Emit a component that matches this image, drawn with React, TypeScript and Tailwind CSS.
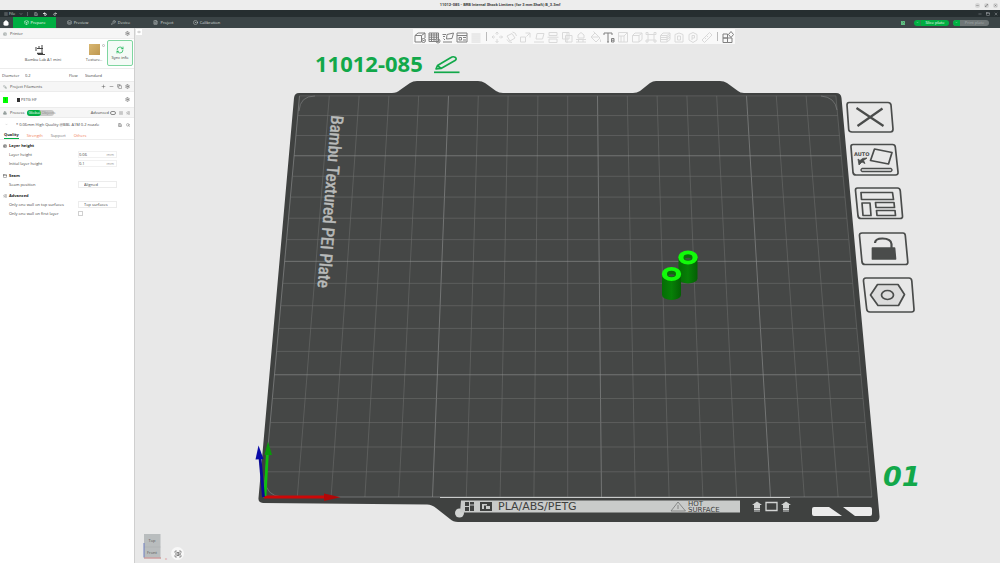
import type { ReactNode } from "react";
import {
  Box,
  Boxes,
  ChevronDown,
  ChevronsLeftRight,
  CircleDot,
  Copy,
  FileText,
  Home,
  Layers,
  List,
  ListChecks,
  Maximize2,
  Menu,
  Minus,
  PanelTop,
  Plus,
  Printer,
  Redo2,
  RefreshCw,
  Save,
  ScanEye,
  Search,
  Settings,
  SquareStack,
  Undo2,
  Wrench,
  X,
  type LucideIcon,
} from "lucide-react";

const FONT = "font-['Open_Sans','Noto_Sans',sans-serif]";

const TABS: { label: string; icon: LucideIcon }[] = [
  { label: "Prepare", icon: Box },
  { label: "Preview", icon: Layers },
  { label: "Device", icon: Wrench },
  { label: "Project", icon: FileText },
  { label: "Calibration", icon: CircleDot },
];

export default function App() {
  return (
    <div
      className={`flex h-screen w-full flex-col overflow-hidden bg-[#e8e8e8] text-[4px] leading-none text-[#444] ${FONT}`}
    >
      <TitleBar />
      <MenuBar />
      <TabBar />
      <div className="flex min-h-0 flex-1">
        <Sidebar />
        <Viewport />
      </div>
    </div>
  );
}

function TitleBar() {
  return (
    <header className="grid h-[10px] shrink-0 grid-cols-[1fr_auto_1fr] items-center bg-[#ededed]">
      <h1 className="col-start-2 font-['Roboto',sans-serif] font-bold text-[#3c3c3c]">
        11012-085 - BRB Internal Shock Limiters (for 3 mm Shaft) B_3.3mf
      </h1>
      <div className="flex justify-end gap-1 pr-[2px] text-[#555]">
        {[Minus, Maximize2, X].map((Icon, i) => (
          <button
            key={i}
            aria-label={["Minimize window", "Maximize window", "Close window"][i]}
            className="flex size-[5px] items-center justify-center rounded-full bg-[#d6d6d6]"
          >
            <Icon className="size-[3px]" strokeWidth={3} />
          </button>
        ))}
      </div>
    </header>
  );
}

function MenuBar() {
  return (
    <div className="flex h-[7px] shrink-0 items-center bg-[#262e30] text-[#d5d9da]">
      <button className="flex items-center gap-px pl-1">
        <Menu className="size-1" /> File
      </button>
      <button aria-label="More" className="ml-1">
        <ChevronDown className="size-1" />
      </button>
      <span className="ml-1 h-1 w-px bg-[#566062]" />
      <button aria-label="Save" className="ml-[6px]">
        <Save className="size-1" />
      </button>
      <button aria-label="Undo" className="ml-[5px] text-white">
        <Undo2 className="size-1" strokeWidth={5} />
      </button>
      <button aria-label="Redo" className="ml-[6px]">
        <Redo2 className="size-1" strokeWidth={4} />
      </button>
      <div className="ml-auto flex gap-1 pr-[2px]">
        <button aria-label="Minimize">
          <Minus className="size-1" />
        </button>
        <button aria-label="Restore">
          <PanelTop className="size-1" />
        </button>
        <button aria-label="Close">
          <X className="size-1" />
        </button>
      </div>
    </div>
  );
}

function TabBar() {
  return (
    <nav className="flex h-[11px] shrink-0 items-center bg-[#3b4446] text-[#d9dddd]">
      <button aria-label="Home" className="flex h-full w-[13px] items-center justify-center pr-[2px]">
        <Home className="size-[6px] fill-white text-white" />
      </button>
      {TABS.map(({ label, icon: Icon }, i) => (
        <button
          key={label}
          className={`flex h-full w-[43px] items-center justify-center gap-[2px] ${
            i === 0 ? "bg-[#00ae42] text-white" : ""
          }`}
        >
          <Icon className="size-[5px]" /> {label}
        </button>
      ))}
      <div className="ml-auto flex items-center pr-[11px]">
        <span className="mr-[9px] flex size-1 items-center justify-center bg-[#5fbf82]">
          <X className="size-[3px] text-[#2c4a38]" />
        </span>
        <button className="mr-1 flex h-[6px] w-[35px] items-center rounded-full bg-[#00ae42] text-white">
          <span className="flex h-full w-[7px] items-center justify-center border-r border-[#2c8a4c]">
            <ChevronDown className="size-[3px]" />
          </span>
          <span className="flex-1">Slice plate</span>
        </button>
        <button className="flex h-[6px] w-[36px] items-center overflow-hidden rounded-full bg-[#6f7677] text-[#a4aaab]">
          <span className="flex h-full w-[7px] items-center justify-center bg-[#00ae42] text-white">
            <ChevronDown className="size-[3px]" />
          </span>
          <span className="flex-1">Print plate</span>
        </button>
      </div>
    </nav>
  );
}

function PanelHeader({
  icon: Icon,
  title,
  children,
}: {
  icon: LucideIcon;
  title: string;
  children?: ReactNode;
}) {
  return (
    <div className="flex h-[11px] items-center gap-[3px] border-y border-[#ececec] bg-[#f6f6f6] pr-1 pl-[3px]">
      <Icon className="size-1 text-[#7d8a87]" />
      <h2>{title}</h2>
      {children}
    </div>
  );
}

function Sidebar() {
  return (
    <aside className="w-[135px] shrink-0 overflow-hidden border-r border-[#cfcfcf] bg-white">
      <PanelHeader icon={Printer} title="Printer">
        <button aria-label="Printer settings" className="ml-auto">
          <Settings className="size-[5px]" />
        </button>
      </PanelHeader>

      <div className="flex h-[29px] items-start pt-px pr-px">
        <button className="flex w-[86px] flex-col items-center gap-[2px] pt-1">
          <PrinterDrawing />
          <span>Bambu Lab A1 mini</span>
        </button>
        <button className="flex w-[16px] flex-col items-center gap-[3px] pt-1">
          <span className="size-[11px] bg-gradient-to-br from-[#d9b771] to-[#bf9850]" />
          <span>Texture..</span>
        </button>
        <span className="mt-1 size-[3px] rounded-full border border-[#bbb]" />
        <button className="ml-auto flex h-[26px] w-[26px] flex-col items-center justify-center gap-[2px] rounded-xs border border-[#7fd6a0] bg-[#f4fbf6] text-[#333]">
          <RefreshCw className="size-2 text-[#00ae42]" />
          Sync info
        </button>
      </div>

      <div className="flex h-[13px] items-center border-t border-[#ececec] pt-px pl-[2px]">
        <label htmlFor="diameter" className="w-[23px]">
          Diameter
        </label>
        <Select id="diameter" options={["0.2", "0.4"]} className="w-[44px]" />
        <label htmlFor="flow" className="w-[16px]">
          Flow
        </label>
        <Select id="flow" options={["Standard", "High"]} className="w-[44px]" />
      </div>

      <PanelHeader icon={SquareStack} title="Project Filaments">
        <div className="ml-auto flex items-center gap-[3px]">
          <button aria-label="Add filament">
            <Plus className="size-[5px]" />
          </button>
          <button aria-label="Remove filament">
            <Minus className="size-[5px]" />
          </button>
          <button aria-label="Sync filaments">
            <Copy className="size-[5px]" />
          </button>
          <button aria-label="Filament settings">
            <Settings className="size-[5px]" />
          </button>
        </div>
      </PanelHeader>

      <div className="flex h-[15px] items-center pr-1 pl-[3px]">
        <span className="flex h-[6px] w-[5px] items-center justify-center bg-[#00ff00] text-[#116611]">
          1
        </span>
        <span className="ml-[9px] h-1 w-[3px] bg-[#333]" />
        <Select id="filament" label="Filament" options={["PETG HF"]} className="ml-px w-[88px]" />
        <button aria-label="Edit filament" className="ml-auto">
          <Settings className="size-[5px]" />
        </button>
      </div>

      <PanelHeader icon={Boxes} title="Process">
        <div className="flex h-[6px] items-center rounded-full bg-[#c9c9c9]">
          <button className="h-full w-[14px] rounded-full bg-[#00ae42] text-white">Global</button>
          <button className="h-full w-[13px] text-[#8d8d8d]">Objects</button>
        </div>
        <label htmlFor="advanced" className="ml-auto">
          Advanced
        </label>
        <input
          id="advanced"
          type="checkbox"
          role="switch"
          className="-ml-[2px] h-1 w-[6px] appearance-none rounded-full border border-[#8a8a8a]"
        />
        <button aria-label="Parameter list">
          <List className="size-1" />
        </button>
        <button aria-label="Compare presets">
          <ListChecks className="size-1" />
        </button>
      </PanelHeader>

      <div className="flex h-[13px] items-center pr-1 pl-[5px]">
        <ChevronDown className="size-[3px] text-[#999]" />
        <Select
          id="preset"
          label="Process preset"
          options={["* 0.06mm High Quality @BBL A1M 0.2 nozzle"]}
          className="ml-2 w-[98px]"
        />
        <button aria-label="Save preset" className="ml-auto">
          <Save className="size-1" />
        </button>
        <button aria-label="Search" className="ml-1">
          <Search className="size-1" />
        </button>
      </div>

      <div className="flex h-[9px] items-stretch gap-2 border-b border-[#eee] pl-1">
        <button className="border-b border-[#00ae42] pt-px font-bold text-[#222]">Quality</button>
        <button className="pt-px text-[#f07a55]">Strength</button>
        <button className="pt-px text-[#777]">Support</button>
        <button className="pt-px text-[#f07a55]">Others</button>
      </div>

      <SettingGroup icon={Printer} title="Layer height" className="mt-[2px]">
        <NumberRow id="layer" label="Layer height" value="0.06" />
        <NumberRow id="initial" label="Initial layer height" value="0.1" />
      </SettingGroup>

      <SettingGroup icon={PanelTop} title="Seam" className="mt-1">
        <SettingRow id="seam" label="Seam position">
          <Select
            id="seam"
            options={["Aligned", "Nearest", "Back"]}
            className="w-[39px] border border-[#ececec] pl-[5px]"
          />
        </SettingRow>
      </SettingGroup>

      <SettingGroup icon={ListChecks} title="Advanced" className="mt-[3px]">
        <SettingRow id="top-wall" label="Only one wall on top surfaces">
          <Select
            id="top-wall"
            options={["Top surfaces", "Topmost"]}
            className="w-[39px] border border-[#ececec] pl-[5px]"
          />
        </SettingRow>
        <SettingRow id="first-wall" label="Only one wall on first layer">
          <input
            id="first-wall"
            type="checkbox"
            className="size-[5px] appearance-none border border-[#d0d0d0] bg-white"
          />
        </SettingRow>
      </SettingGroup>
    </aside>
  );
}

function Select({
  id,
  label,
  options,
  className = "",
}: {
  id: string;
  label?: string;
  options: string[];
  className?: string;
}) {
  return (
    <select id={id} aria-label={label} className={`h-[7px] appearance-none bg-transparent ${className}`}>
      {options.map((o) => (
        <option key={o}>{o}</option>
      ))}
    </select>
  );
}

function SettingGroup({
  icon: Icon,
  title,
  className,
  children,
}: {
  icon: LucideIcon;
  title: string;
  className: string;
  children: ReactNode;
}) {
  return (
    <section className={`pl-[3px] ${className}`}>
      <h3 className="flex h-2 items-center gap-[2px] font-bold text-[#222]">
        <Icon className="size-1" /> {title}
      </h3>
      {children}
    </section>
  );
}

function SettingRow({ id, label, children }: { id: string; label: string; children: ReactNode }) {
  return (
    <div className="flex h-[9px] items-center pl-[6px]">
      <label htmlFor={id} className="w-[69px]">
        {label}
      </label>
      {children}
    </div>
  );
}

function NumberRow({ id, label, value }: { id: string; label: string; value: string }) {
  return (
    <SettingRow id={id} label={label}>
      <span className="flex h-[7px] w-[39px] items-center border border-[#f1f1f1] pr-[2px] text-[#999]">
        <input id={id} defaultValue={value} className="w-full min-w-0 bg-transparent text-[#444]" />
        mm
      </span>
    </SettingRow>
  );
}

function PrinterDrawing() {
  return (
    <svg viewBox="0 0 12 12" className="ml-[-7px] size-3" fill="none" stroke="#444" strokeWidth="1">
      <path d="M8 1v9M3 4.500h6M4 10.500h7M2 3v4M5 2v3" />
      <path d="M3 9.500h6" strokeWidth="1.500" />
    </svg>
  );
}

type Tool = { name: string; d: string; enabled?: boolean };

// All tool glyphs are drawn on a 14 x 14 grid.
const PLATE_TOOLS: Tool[] = [
  { name: "Add", enabled: true, d: "M2 5.500h6.500V12H2zM2 5.500L5 3h7L8.500 5.500M12 3v5M8.500 10.500a2 2 0 1 0 4 0a2 2 0 1 0-4 0M9.500 10.500h2" },
  { name: "Add plate", enabled: true, d: "M2 3h9.500v8.500H2zM2 5h9.500M2 7.200h9.500M2 9.400h7M4.500 3v8.500M7 3v8.500M9.500 3v6M9 11a2 2 0 1 0 4 0a2 2 0 1 0-4 0M10 11h2" },
  { name: "Auto orient", enabled: true, d: "M6 4.500L12.500 3L11 8.500L5.500 9zM1.500 4.500h3.500M2 6.500h2M2.500 8.500L4 10M2 12h9" },
  { name: "Arrange", enabled: true, d: "M2 3h10v9H2zM2 5.500h10M4 7.500h2.500v2.500H4zM8 7.500h3M8 10h3" },
  { name: "Split to objects", d: "M2.500 4h9M2.500 6h9M2.500 8h9M2.500 10h9M2.500 12h9" },
];

const OBJECT_TOOLS: Tool[] = [
  { name: "Move", d: "M7 2v3M7 9v3.500M2 7h3M9 7h3.500M5.500 3.500L7 2l1.500 1.500M5.500 11L7 12.500L8.500 11M3.500 5.500L2 7l1.500 1.500M11 5.500L12.500 7L11 8.500" },
  { name: "Rotate", d: "M3 6l5-2.500L11 8l-5 3zM3 9.500Q4 12.500 8 12.500M12.500 6Q12 2.500 8.500 2" },
  { name: "Scale", d: "M2.500 7h5v5h-5zM7.500 3H12v4.500M12 3L8.500 6.500" },
  { name: "Lay on face", d: "M5 3.500h7L10.500 9H4zM2 12h10" },
  { name: "Cut", d: "M3 2.500h8v3H3zM3 9h8v3.500H3zM1.500 7.200h11" },
  { name: "Mesh boolean", d: "M2.500 2.500H9V9H2.500zM5.500 5.500H12V12H5.500zM7 2v11" },
  { name: "Support painting", d: "M4 8V5l3-2.500L10 5v3zM2 9.500h10M2 12h10M4.500 9.500V12M9 9.500V12" },
  { name: "Color painting", d: "M3 7l4-4l5 5l-4 4zM7 3L5.500 1.500M3 7h7.500M12.500 9.500v2.500" },
  { name: "Text", enabled: true, d: "M2 5V3h8v2M6 3v9M5 12h2M9.500 8.500h2.500v3.500H9.500zM9.500 10.200H12" },
  { name: "Seam painting", d: "M2.500 2.500h9v9.500h-9zM5 6h3v6M8 6l3-3M2.500 6H5v6" },
  { name: "Variable layer", d: "M2.500 5.500H9V12H2.500zM2.500 5.500L5 3h7L9 5.500M12 3v6.500L9 12" },
  { name: "Simplify", d: "M4 4.500h6v5.500H4zM2 2.500h2v2H2zM10 2.500h2v2h-2zM2 10h2v2H2zM10 10h2v2h-2z" },
  { name: "Assemble parts", d: "M2.500 5.500H9V12H2.500zM2.500 5.500L5 3h7L9 5.500M12 3v6.500L9 12M2.500 7.500H9M2.500 9.500H9M9 7.500L12 5M9 9.500L12 7" },
  { name: "Brim ears", d: "M3 4.500Q7 1.500 11 4.500V12H3zM5.500 6h3v4h-3z" },
  { name: "Connectors", d: "M3 4.500L7 2.500L11 4.500V10L7 12.500L3 10zM6 10V5.500h2.500V8H6" },
  { name: "Measure", d: "M2 10L9.500 2.500L12 5L4.500 12.500zM5 8l1 1M7 6l1 1" },
];

const ASSEMBLY_TOOL: Tool = {
  name: "Assembly view",
  enabled: true,
  d: "M2 4h4.500v4H2zM2 8h4.500v4.500H2zM6.500 8H11v4.500H6.500zM10 1.500L12.500 4.500L10 7.500L7.500 4.500z",
};

function ToolButton({ name, d, enabled }: Tool) {
  return (
    <button aria-label={name} className={`w-[14px] ${enabled ? "text-[#808080]" : "text-[#dadada]"}`}>
      <svg viewBox="0 0 14 14" className="size-[14px]" fill="none" stroke="currentColor">
        <path d={d} />
      </svg>
    </button>
  );
}

function Viewport() {
  return (
    <main className="relative min-w-0 flex-1 bg-[#e8e8e8]">
      <Scene />
      <button
        aria-label="Collapse sidebar"
        className="absolute top-px left-px flex h-[6px] w-[6px] items-center justify-center bg-white"
      >
        <ChevronsLeftRight className="size-1" />
      </button>
      <div className="absolute inset-x-0 top-px flex justify-center pl-3">
        <div className="flex h-[15px] bg-[#f9f9f9]">
          {PLATE_TOOLS.map((t) => (
            <ToolButton key={t.name} {...t} />
          ))}
          <span className="mx-[3px] my-[3px] w-px bg-[#bbb]" />
          {OBJECT_TOOLS.map((t) => (
            <ToolButton key={t.name} {...t} />
          ))}
          <span className="mx-[3px] my-[3px] w-px bg-[#bbb]" />
          <ToolButton {...ASSEMBLY_TOOL} />
        </div>
      </div>
    </main>
  );
}

// Build plate seen in perspective: 18 x 18 cells, every fifth line is brighter.
const CELLS = Array.from({ length: 19 }, (_, i) => i);

function rowY(i: number) {
  return 497 - (25.39 * i) / (1 + 0.00774 * i);
}

function edgeX(y: number, i: number) {
  const t = (y - 95.8) / (497 - 95.8);
  const top = 299.5 + 29.8 * i;
  const bottom = 263.5 + 33.8 * i;
  return top + (bottom - top) * t;
}

function Grid() {
  return (
    <g strokeWidth={0.6}>
      {CELLS.map((i) => (
        <line
          key={`v${i}`}
          x1={edgeX(95.8, i)}
          y1={95.8}
          x2={edgeX(497, i)}
          y2={497}
          stroke={i % 5 === 0 ? "#929493" : "#6b6d6c"}
        />
      ))}
      {CELLS.map((i) => (
        <line
          key={`h${i}`}
          x1={edgeX(rowY(i), 0)}
          y1={rowY(i)}
          x2={edgeX(rowY(i), 18)}
          y2={rowY(i)}
          stroke={i % 5 === 0 ? "#929493" : "#6b6d6c"}
        />
      ))}
    </g>
  );
}

function Cylinder({ x, y }: { x: number; y: number }) {
  return (
    <g>
      <path d={`M${x - 9.5} ${y}v21a9.500 5 0 0 0 19 0v-21z`} fill="url(#tube)" />
      <ellipse cx={x} cy={y} rx="9.700" ry="7" fill="#12fa0a" />
      <ellipse cx={x} cy={y} rx="4.500" ry="3.300" fill="#087008" />
      <path d={`M${x - 3.5} ${y + 1.5}a4 2.500 0 0 1 7 0a4.500 3 0 0 1-7 0`} fill="#3f5340" />
    </g>
  );
}

function PlateButton({
  name,
  box,
  children,
}: {
  name: string;
  box: [number, number, number, number];
  children: ReactNode;
}) {
  const [x, y, w, h] = box;
  return (
    <foreignObject x={x} y={y} width={w} height={h}>
      <button aria-label={name} className="block size-full">
        <svg
          viewBox={box.join(" ")}
          className="block size-full"
          fill="none"
          stroke="#4a4c4b"
          strokeWidth="1.700"
          strokeLinejoin="round"
        >
          {children}
        </svg>
      </button>
    </foreignObject>
  );
}

function Scene() {
  return (
    <svg viewBox="135 28 865 535" className="absolute inset-0 size-full">
      <defs>
        <linearGradient id="tube">
          <stop offset="0" stopColor="#056d05" />
          <stop offset="0.500" stopColor="#078007" />
          <stop offset="1" stopColor="#045f04" />
        </linearGradient>
      </defs>

      <path
        fill="#3f4140"
        d="M299 93H392Q397 93 400 90L410 83Q413 81 417 81H478Q482 81 485 83L496 91Q499 93 503 93H633Q637 93 640 91L650 83Q653 81 656 81H720Q724 81 727 83L738 91Q740 93 744 93H836Q841 93 841.500 98L879.500 516Q880 522 874 522H458Q453 522 450 519L436 508Q432 504.500 427 504.500L263 503Q258 503 258.500 498L294 98Q294.500 93 299 93Z"
      />
      <path fill="#454746" d="M299.500 95.800H836L872 497H263.500Z" />
      <Grid />
      <path d="M299 111Q300 96 315 96M821 96Q835 97 837 110M265 480Q266 496 282 497" fill="none" stroke="#858786" strokeWidth="0.600" />

      <text
        transform="translate(331.500 115) rotate(94.600)"
        strokeWidth="0.500"
        className="fill-[#b9bbba] stroke-[#b9bbba] font-['Liberation_Sans_Narrow','Roboto_Condensed','Liberation_Sans',sans-serif] text-[17px]"
      >
        Bambu Textured PEI Plate
      </text>
      <text x="315" y="72" className="fill-[#12a84a] font-['Noto_Sans',sans-serif] text-[22px] font-bold">
        11012-085
      </text>
      <text
        x="883"
        y="486"
        className="fill-[#12a84a] font-['DejaVu_Sans',sans-serif] text-[27px] font-bold italic"
      >
        01
      </text>

      <PlateButton name="Rename plate" box={[432, 53, 30, 22]}>
        <g stroke="#12a84a">
          <path d="M436 69L437.500 65.500L451 57.500Q453 56 455.500 57.500Q457 59 455 60.500L441 68.500ZM438 66L441 68.500" />
          <path d="M434 72.300H459.500" />
        </g>
      </PlateButton>

      <Cylinder x={688} y={257.5} />
      <Cylinder x={671.5} y={274} />

      {/* front label strip */}
      <path d="M440 497.500H790" stroke="#c9cbca" strokeWidth="1" />
      <circle cx="459.500" cy="513" r="4.500" fill="#d2d4d3" />
      <path d="M461 500.500H740V512.500H460Z" fill="#c9cbca" />
      <g fill="#3f4140">
        <path d="M465 502h4v4h-4zM470 502h4v2.500h-4zM465 507h4v4h-4zM470 505.500h4v5.500h-4z" />
        <path d="M480 502h12v9h-12zM482 504v5h2v-3.500h3v-1.500zM486 506h4v3h-4z" fillRule="evenodd" />
      </g>
      <text x="498" y="510" className="fill-[#3f4140] font-['DejaVu_Sans',sans-serif] text-[11px]">
        PLA/ABS/PETG
      </text>
      <path d="M671 511L678 502L685.500 511ZM678 505v4" fill="none" stroke="#6a6c6b" strokeWidth="0.700" />
      <g className="fill-[#3f4140] font-['DejaVu_Sans',sans-serif] text-[7px]">
        <text x="688" y="506">
          HOT
        </text>
        <text x="688" y="512">
          SURFACE
        </text>
      </g>
      <g fill="#d2d4d3">
        <path d="M752 505L757 501.500L762 505H760V511.500H754V505ZM781 505L786 501.500L791 505H789V511.500H783V505Z" />
        <path d="M754 508.500h6M754 510.500h6M783 508.500h6M783 510.500h6" stroke="#3b3d3c" strokeWidth="0.500" />
        <path d="M766 502.500H777V510.500H766Z" fill="none" stroke="#d2d4d3" strokeWidth="1.300" />
      </g>
      <path d="M814 507H829L842 516H814Q812 516 812 514V509Q812 507 814 507ZM843 507H870Q872 507 872 509V514Q872 516 870 516H855Z" fill="#ebebeb" />

      {/* axes */}
      <path d="M264 497H325" stroke="#cc0808" strokeWidth="2.800" />
      <path d="M324 493.500L340.500 497.300L324 501Z" fill="#b00808" />
      <path d="M265 496L267.500 452" stroke="#0dc00d" strokeWidth="2.800" />
      <path d="M264.500 455L268 441.500L272 455Z" fill="#0a990a" />
      <path d="M263.500 497L260 458" stroke="#0a0a94" strokeWidth="2.800" />
      <path d="M255.500 459.500L258.500 445.500L263.500 459Z" fill="#0a0aa8" />

      <PlateButton name="Remove plate" box={[844, 100, 52, 35]}>
        <path d="M849 102.500H888Q890.500 102.500 891 105L893 129Q893 132 890.500 132H852Q849 132 848.700 129.500L847 105Q847 102.500 849 102.500Z" />
        <path d="M856.500 108L883.500 126M882.500 108.500L857.500 126" strokeWidth="2.200" />
      </PlateButton>
      <PlateButton name="Auto orient plate" box={[849, 142, 52, 36]}>
        <path d="M853 144.500H892.500Q895 144.500 895.300 147L898 172Q898.300 175 895.500 175H856Q853.500 175 853 172.500L851 147Q850.800 144.500 853 144.500Z" />
        <path d="M874.500 149L892 152.500L888.500 164L870.500 160.500Z" />
        <path d="M859 165L858 159L860 160.500Q862 157.500 867 158L863.500 160.500L865 163.500L862 162Z" fill="#4a4c4b" strokeWidth="0.800" />
        <path d="M862 168.500H891Q893 170 891 171.500H862Q860 170 862 168.500Z" strokeWidth="1.400" />
        <text x="854" y="155.500" stroke="none" className="fill-[#4a4c4b] font-['DejaVu_Sans',sans-serif] text-[5px] font-bold">
          AUTO
        </text>
      </PlateButton>
      <PlateButton name="Arrange plate" box={[852, 185, 54, 37]}>
        <path d="M857.500 188H897.500Q900 188 900.300 191L902.500 216Q902.800 218.500 900 218.500H861Q858.500 218.500 858 216L855.500 190.500Q855.300 188 857.500 188Z" />
        <path d="M861 192.500H892.500L893.500 199.500H861.500ZM862 203H870L871 215.500H863ZM875.500 202.500H894L894.500 207.500H876ZM876.500 210.500H895L895.500 215.500H877Z" />
      </PlateButton>
      <PlateButton name="Lock plate" box={[856, 230, 55, 37]}>
        <path d="M862 233H903Q905 233 905.300 235.500L907.800 262Q908 264.500 905.500 264.500H865Q862.500 264.500 862 262L859.500 235.500Q859.300 233 862 233Z" />
        <path d="M872.500 248H894.500L895.500 259H872.500Z" fill="#4a4c4b" />
        <path d="M875 243Q875 238.500 882.500 238.500Q891 238.500 891.500 244V248" strokeWidth="2.200" />
      </PlateButton>
      <PlateButton name="Plate settings" box={[861, 275, 56, 40]}>
        <path d="M866 278H909Q911.500 278 911.800 281L914 309Q914.300 312 911.500 312H870Q867 312 866.700 309L863.500 281Q863.300 278 866 278Z" />
        <path d="M870.500 295L877.500 284.500H898L904.500 294.500L898.500 305.500H878Z" fill="#dcdcdc" />
        <ellipse cx="887.500" cy="295" rx="6" ry="4.500" />
      </PlateButton>

      {/* view cube */}
      <path d="M144 534H160.500V557.500H144Z" fill="#b9bdbe" />
      <path d="M144 547H160.500" stroke="#a9adae" strokeWidth="0.500" />
      <path d="M144 557.500V543" stroke="#6e7fc0" strokeWidth="1" />
      <path d="M144 558H161" stroke="#c07a7a" strokeWidth="1" />
      <g className="fill-[#555] text-[4px]">
        <text x="148.500" y="542">
          Top
        </text>
        <text x="147" y="554">
          Front
        </text>
        <text x="165" y="560" className="fill-[#d88]">
          x
        </text>
      </g>
      <foreignObject x="171" y="547" width="13" height="13">
        <button aria-label="Fit view" className="flex size-[13px] items-center justify-center rounded-full bg-[#f8f8f8]">
          <ScanEye className="size-2" />
        </button>
      </foreignObject>
    </svg>
  );
}
